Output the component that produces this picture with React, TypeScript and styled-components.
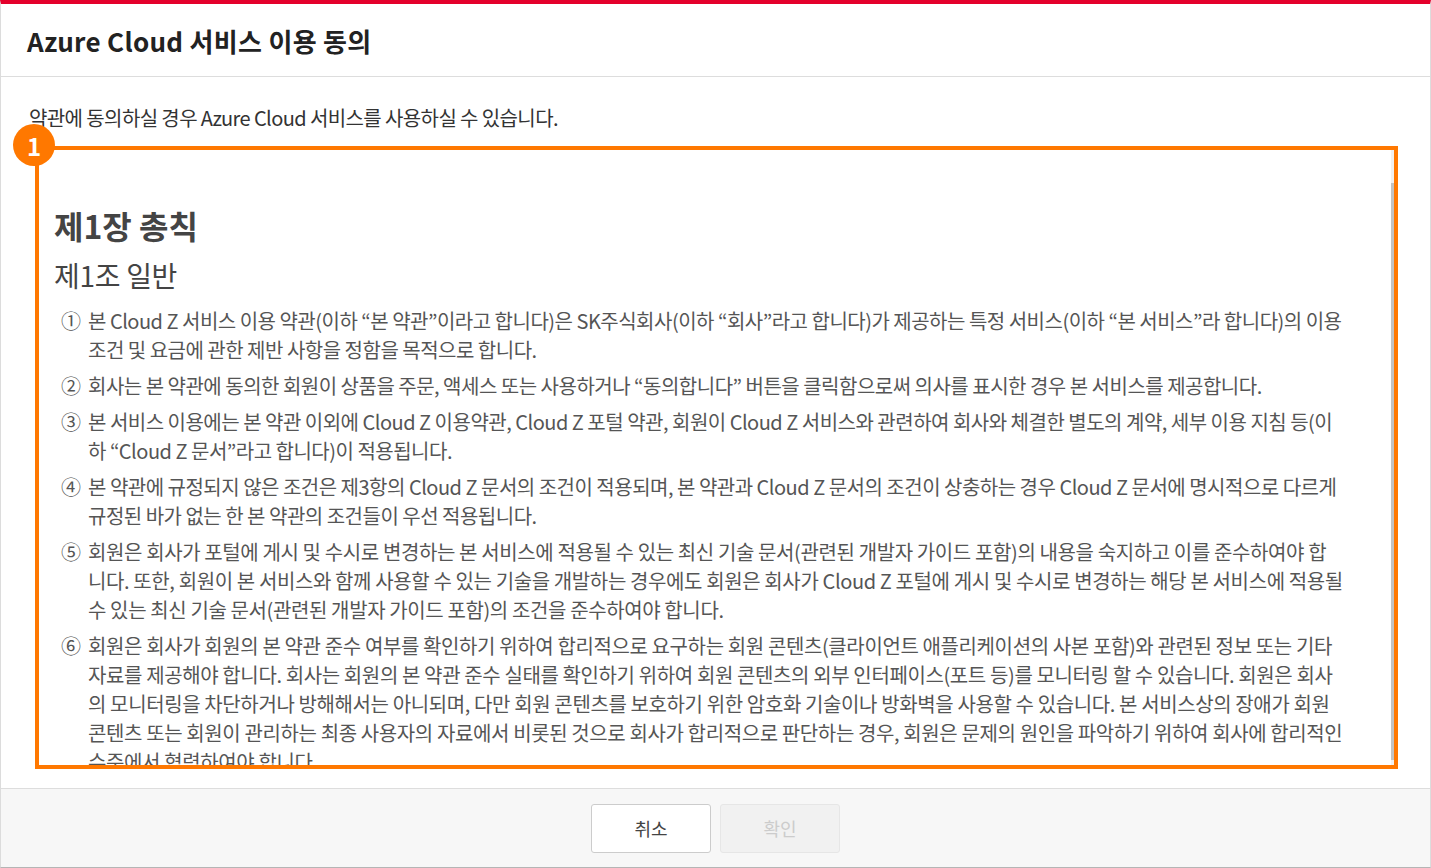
import React from 'react';
import styled, { createGlobalStyle } from 'styled-components';

const GlobalStyle = createGlobalStyle`
  html, body {
    margin: 0;
    padding: 0;
    background: #ffffff;
  }
  body {
    font-family: 'Noto Sans CJK KR', 'Noto Sans', sans-serif;
  }
  * {
    box-sizing: border-box;
  }
`;

const terms = [
  { mark: '①', tracking: -0.5, text: '본 Cloud Z 서비스 이용 약관(이하 “본 약관”이라고 합니다)은 SK주식회사(이하 “회사”라고 합니다)가 제공하는 특정 서비스(이하 “본 서비스”라 합니다)의 이용 조건 및 요금에 관한 제반 사항을 정함을 목적으로 합니다.' },
  { mark: '②', tracking: -0.5, text: '회사는 본 약관에 동의한 회원이 상품을 주문, 액세스 또는 사용하거나 “동의합니다” 버튼을 클릭함으로써 의사를 표시한 경우 본 서비스를 제공합니다.' },
  { mark: '③', tracking: -0.5, text: '본 서비스 이용에는 본 약관 이외에 Cloud Z 이용약관, Cloud Z 포털 약관, 회원이 Cloud Z 서비스와 관련하여 회사와 체결한 별도의 계약, 세부 이용 지침 등(이하 “Cloud Z 문서”라고 합니다)이 적용됩니다.' },
  { mark: '④', tracking: -0.5, text: '본 약관에 규정되지 않은 조건은 제3항의 Cloud Z 문서의 조건이 적용되며, 본 약관과 Cloud Z 문서의 조건이 상충하는 경우 Cloud Z 문서에 명시적으로 다르게 규정된 바가 없는 한 본 약관의 조건들이 우선 적용됩니다.' },
  { mark: '⑤', tracking: -0.38, text: '회원은 회사가 포털에 게시 및 수시로 변경하는 본 서비스에 적용될 수 있는 최신 기술 문서(관련된 개발자 가이드 포함)의 내용을 숙지하고 이를 준수하여야 합니다. 또한, 회원이 본 서비스와 함께 사용할 수 있는 기술을 개발하는 경우에도 회원은 회사가 Cloud Z 포털에 게시 및 수시로 변경하는 해당 본 서비스에 적용될 수 있는 최신 기술 문서(관련된 개발자 가이드 포함)의 조건을 준수하여야 합니다.' },
  { mark: '⑥', tracking: -0.38, text: '회원은 회사가 회원의 본 약관 준수 여부를 확인하기 위하여 합리적으로 요구하는 회원 콘텐츠(클라이언트 애플리케이션의 사본 포함)와 관련된 정보 또는 기타 자료를 제공해야 합니다. 회사는 회원의 본 약관 준수 실태를 확인하기 위하여 회원 콘텐츠의 외부 인터페이스(포트 등)를 모니터링 할 수 있습니다. 회원은 회사의 모니터링을 차단하거나 방해해서는 아니되며, 다만 회원 콘텐츠를 보호하기 위한 암호화 기술이나 방화벽을 사용할 수 있습니다. 본 서비스상의 장애가 회원 콘텐츠 또는 회원이 관리하는 최종 사용자의 자료에서 비롯된 것으로 회사가 합리적으로 판단하는 경우, 회원은 문제의 원인을 파악하기 위하여 회사에 합리적인 수준에서 협력하여야 합니다.' },
];

export default function App() {
  return (
    <>
      <GlobalStyle />
      <Frame>
        <Header>
          <Title>Azure Cloud 서비스 이용 동의</Title>
        </Header>
        <Body>
          <Lead>약관에 동의하실 경우 Azure Cloud 서비스를 사용하실 수 있습니다.</Lead>
          <TermsBox>
            <Badge>1</Badge>
            <TermsScroll>
              <TermsContent>
                <Chapter>제1장 총칙</Chapter>
                <Article>제1조 일반</Article>
                <ItemList>
                  {terms.map((t) => (
                    <Item key={t.mark} $tracking={t.tracking}>
                      <Mark>{t.mark}</Mark>
                      <ItemText>{t.text}</ItemText>
                    </Item>
                  ))}
                </ItemList>
              </TermsContent>
              <ScrollTrack>
                <ScrollThumb />
              </ScrollTrack>
            </TermsScroll>
          </TermsBox>
        </Body>
        <Footer>
          <Button>취소</Button>
          <Button disabled>확인</Button>
        </Footer>
      </Frame>
    </>
  );
}

const Frame = styled.div`
  width: 100%;
  height: 868px;
  display: flex;
  flex-direction: column;
  border-top: 4px solid #e4002b;
  border-left: 1px solid #dcdcdc;
  border-right: 1px solid #dcdcdc;
  border-bottom: 1px solid #b5b5b5;
  background: #ffffff;
`;

const Header = styled.div`
  height: 73px;
  flex-shrink: 0;
  display: flex;
  align-items: center;
  padding-left: 26px;
  border-bottom: 1px solid #dddddd;
`;

const Title = styled.h1`
  margin: 0;
  font-size: 26px;
  font-weight: 700;
  color: #222222;
  letter-spacing: 0.3px;
`;

const Body = styled.div`
  flex: 1;
  min-height: 0;
  display: flex;
  flex-direction: column;
  padding: 27px 32px 19px 34px;
`;

const Lead = styled.p`
  margin: 0 0 14px -6px;
  font-size: 20px;
  line-height: 28px;
  color: #333333;
  letter-spacing: -0.6px;
`;

const TermsBox = styled.div`
  position: relative;
  flex: 1;
  min-height: 0;
  border: 4px solid #ff7800;
`;

const Badge = styled.div`
  position: absolute;
  left: -26px;
  top: -26px;
  width: 42px;
  height: 42px;
  border-radius: 50%;
  background: #ff7800;
  color: #ffffff;
  font-size: 24px;
  font-weight: 700;
  display: flex;
  align-items: center;
  justify-content: center;
  z-index: 1;
`;

const TermsScroll = styled.div`
  height: 100%;
  display: flex;
  overflow: hidden;
`;

const TermsContent = styled.div`
  flex: 1;
  min-width: 0;
  padding: 54px 47px 0 15px;
  overflow: hidden;
`;

const ScrollTrack = styled.div`
  width: 3px;
  flex-shrink: 0;
  background: #f1f1f1;
  padding-top: 33px;
  padding-bottom: 5px;
  display: flex;
`;

const ScrollThumb = styled.div`
  flex: 1;
  background: #c3c3c3;
`;

const Chapter = styled.h2`
  margin: 0;
  font-size: 32px;
  line-height: 42px;
  font-weight: 700;
  color: #444444;
  letter-spacing: 0;
`;

const Article = styled.h3`
  margin: 9px 0 0;
  font-size: 28px;
  line-height: 40px;
  font-weight: 400;
  color: #444444;
  letter-spacing: -0.3px;
`;

const ItemList = styled.ol`
  list-style: none;
  margin: 11px 0 0;
  padding: 0 0 0 7px;
`;

const Item = styled.li<{ $tracking: number }>`
  display: flex;
  margin-bottom: 7px;
  font-size: 20px;
  line-height: 29px;
  color: #555555;
  letter-spacing: ${(p) => p.$tracking}px;
`;

const Mark = styled.span`
  width: 27px;
  flex-shrink: 0;
`;

const ItemText = styled.span`
  flex: 1;
`;

const Footer = styled.div`
  height: 79px;
  flex-shrink: 0;
  display: flex;
  align-items: center;
  justify-content: center;
  gap: 9px;
  background: #f7f7f7;
  border-top: 1px solid #dddddd;
`;

const Button = styled.button`
  width: 120px;
  height: 49px;
  border-radius: 3px;
  font-family: 'Noto Sans CJK KR', 'Noto Sans', sans-serif;
  font-size: 18px;
  color: #444444;
  background: #ffffff;
  border: 1px solid #cccccc;
  cursor: pointer;

  &:disabled {
    background: #f1f1f1;
    border-color: #e6e6e6;
    color: #cccccc;
    cursor: default;
  }
`;
